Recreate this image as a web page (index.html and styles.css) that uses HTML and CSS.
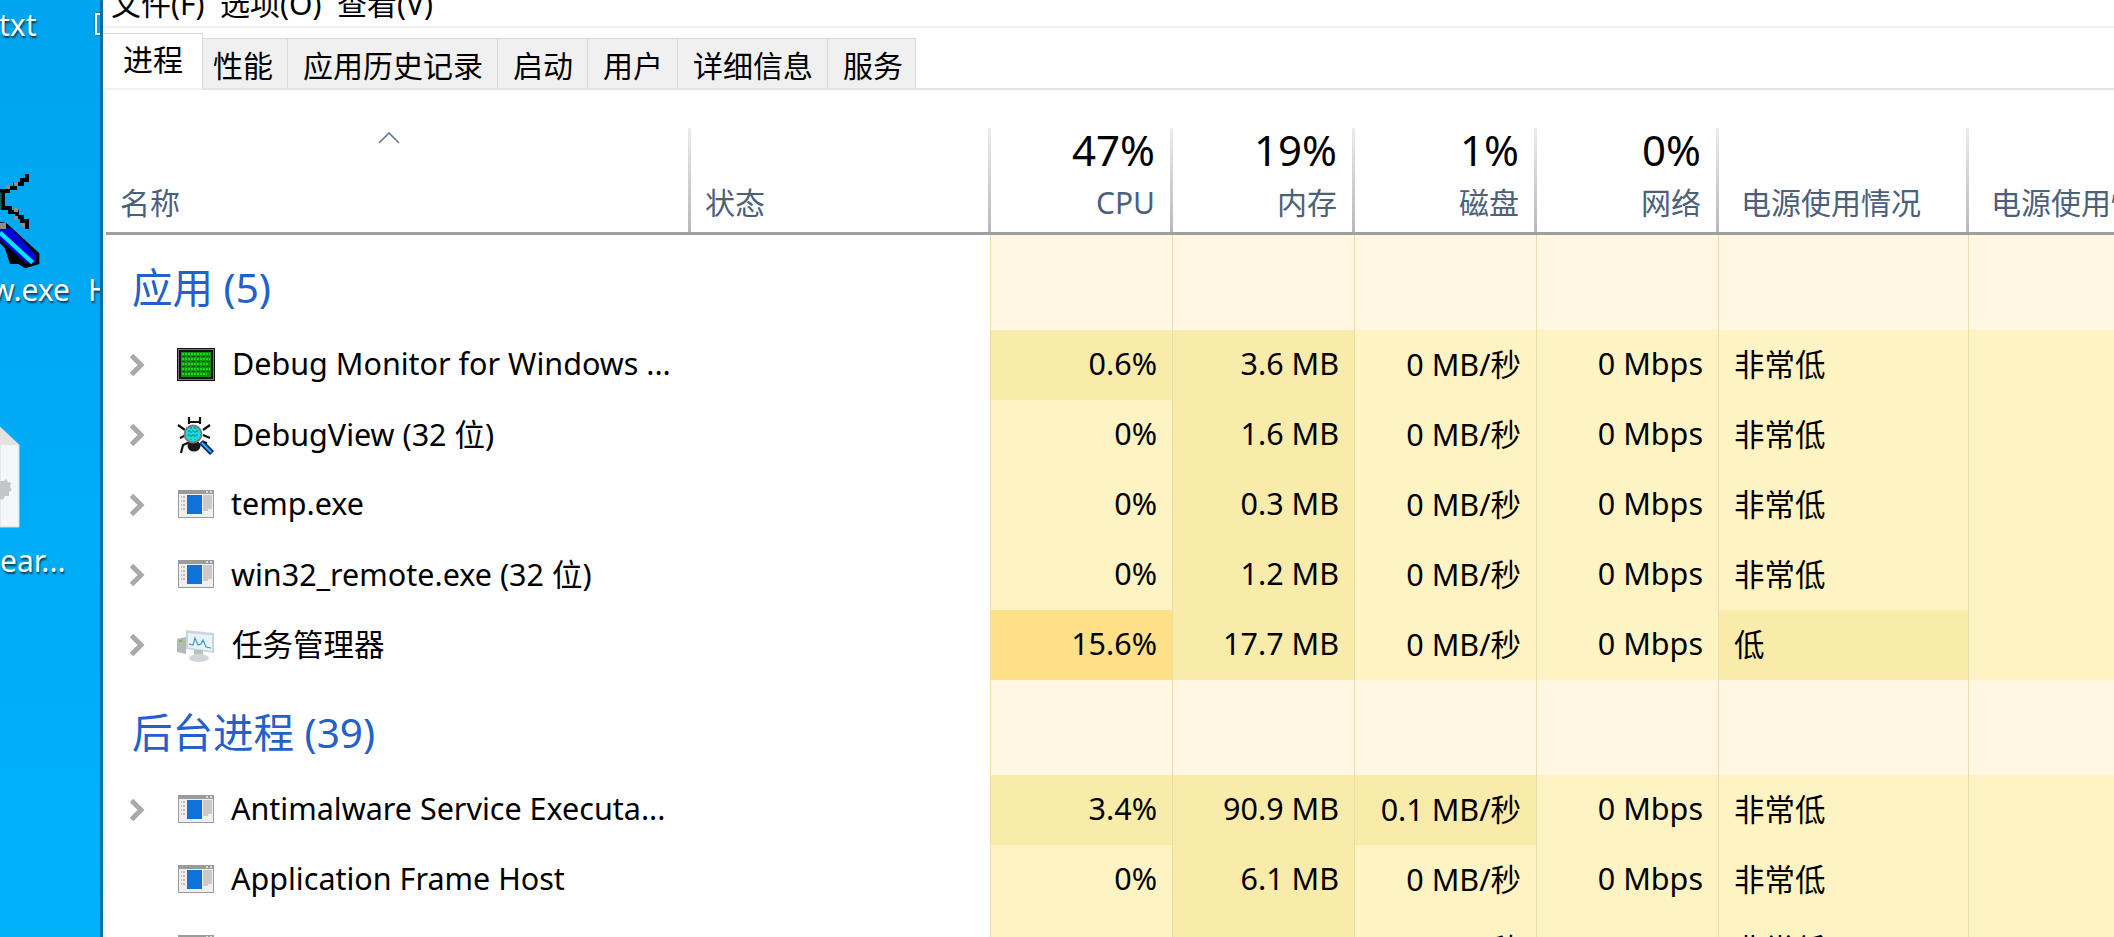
FILE: index.html
```html
<!DOCTYPE html>
<html lang="zh-CN">
<head>
<meta charset="utf-8">
<title>任务管理器</title>
<link rel="stylesheet" href="styles.css">
</head>
<body>
<svg class="defs" width="0" height="0" aria-hidden="true">
  <symbol id="chev" viewBox="0 0 16 24"><path d="M2.5 2.5 12 12 2.5 21.5" fill="none" stroke="#a9a9a9" stroke-width="5"/></symbol>
  <symbol id="app" viewBox="0 0 36 28">
    <rect width="36" height="28" fill="#9b9b9b"/>
    <rect x="1" y="4" width="34" height="23" fill="#efefef"/>
    <rect x="28" y="1" width="2" height="2" fill="#ddd"/><rect x="32" y="1" width="2" height="2" fill="#ddd"/>
    <rect x="9" y="5" width="15" height="19" fill="#0f72d8"/>
    <path d="M3 7h1M5 7h2M3 11h1M5 11h2M3 15h1M5 15h2M3 19h1M5 19h2" stroke="#8a8a8a"/>
    <path d="M25 6h9M25 8h9M25 10h9M25 12h9M25 14h9M25 16h9M25 18h9M25 20h5" stroke="#a5a5a5"/>
  </symbol>
  <symbol id="mon" viewBox="0 0 38 33" shape-rendering="crispEdges">
    <rect width="38" height="33" fill="#111"/>
    <rect x="1" y="1" width="36" height="31" fill="#777"/>
    <rect x="2" y="2" width="34" height="29" fill="#111"/>
    <rect x="4" y="4" width="30" height="25" fill="#0c950c"/>
    <path d="M5 6h28M5 11h28M5 16h27M5 21h28M5 26h25" stroke="#19d819" stroke-width="2" stroke-dasharray="2 1"/>
    <path d="M5 8.500h28M5 13.500h28M5 18.500h28M5 23.500h28" stroke="#064f06" stroke-dasharray="3 2"/>
  </symbol>
  <symbol id="bug" viewBox="0 0 38 38">
    <path d="M12 0v7M23 0v7M12 5h11M1 8l7 5M33 8l-7 5M3 21l6-3M33 21l-7-3M4 36l2-8 7-3M30 26l-4-1" fill="none" stroke="#111" stroke-width="2.200"/>
    <ellipse cx="17" cy="29" rx="6.500" ry="5.500" fill="#1a1a1a"/>
    <circle cx="16" cy="17" r="8.500" fill="#1bdcdc" stroke="#7a7a7a" stroke-width="1.800"/>
    <path d="M11 14h10M11 18h11M14 10v13M18 10v13" stroke="#126b7a" stroke-dasharray="2 2"/>
    <path d="M24 25l11 11" stroke="#111" stroke-width="5.500"/>
    <path d="M24 25l11 11" stroke="#1540e0" stroke-width="3.800"/>
    <path d="M25 26l9 9" stroke="#18e0f8" stroke-width="1.300"/>
  </symbol>
  <symbol id="tm" viewBox="0 0 38 36">
    <path d="M0 12l9-2v17l-9-2z" fill="#b4b8bb"/>
    <rect x="2" y="13" width="3" height="2" fill="#6fc23a"/>
    <path d="M9 3 37 6v20L9 22z" fill="#cfd4d8"/>
    <path d="M11 6 35 8.500V24L11 20.500z" fill="#e6f4fb"/>
    <path d="M12 17l4 1 2-7 3 7 3-1 2-4 3 7 5 1" fill="none" stroke="#3f95d4" stroke-width="1.200"/>
    <rect x="17" y="23" width="9" height="6" fill="#bcc0c3"/>
    <ellipse cx="22" cy="31" rx="10" ry="4" fill="#d3d6d8"/>
  </symbol>
</svg>

<aside class="desktop">
  <span class="dlabel d-txt">txt</span>
  <span class="dglyph"></span>
  <svg class="sword" width="101" height="150" viewBox="0 0 303 450" aria-hidden="true">
    <path d="M0 185 20 190 118 280V312L75 325 55 312 30 312 15 265 0 250z" fill="#000"/>
    <path d="M0 205H34L108 285V308H78L0 240z" fill="#0000d8"/>
    <path d="M0 218 98 308" stroke="#00e8ff" stroke-width="13" fill="none"/>
    <g fill="none" stroke="#000" stroke-width="12" shape-rendering="crispEdges">
      <path d="M80 42V60H65V72H45V85H25V94H0"/>
      <path d="M8 100V145H30V157H50V170H65V182H80V208"/>
    </g>
    <path d="M2 98V150" stroke="#0a6a68" stroke-width="5"/>
    <g fill="#8d8d8d" shape-rendering="crispEdges">
      <rect x="18" y="76" width="12" height="12"/><rect x="41" y="65" width="12" height="12"/>
      <rect x="42" y="145" width="12" height="12"/><rect x="42" y="167" width="12" height="12"/>
      <rect x="64" y="190" width="12" height="12"/><rect x="0" y="188" width="18" height="20"/>
    </g>
  </svg>
  <span class="dlabel d-exe">w.exe</span>
  <span class="dlabel d-h">H</span>
  <svg class="doc" width="20" height="101" viewBox="0 0 20 101" aria-hidden="true">
    <path d="M0 0 19 18V100H0z" fill="#f5f6f8" stroke="#d9dadc"/>
    <path d="M0 0 19 18H0z" fill="#e2e2e2"/>
    <path d="M0 54h4l2-2 2 3 3 1-1 4 2 3-3 2 0 4-4 0-2 4-3-1z" fill="#c3c6c9"/>
  </svg>
  <span class="dlabel d-ear">ear...</span>
</aside>

<main class="window">
  <div class="menu"><span>文件(F)</span><span>选项(O)</span><span>查看(V)</span></div>
  <nav class="tabs">
    <span class="tab active">进程</span>
    <span class="tab tab-narrow">性能</span>
    <span class="tab">应用历史记录</span>
    <span class="tab">启动</span>
    <span class="tab">用户</span>
    <span class="tab">详细信息</span>
    <span class="tab tab-last">服务</span>
  </nav>
  <section class="table">
    <div class="row head">
      <div class="hc hname"><svg class="sort" width="22" height="12" viewBox="0 0 22 12" aria-hidden="true"><path d="M1 11 11 1l10 10" fill="none" stroke="#5d7a94" stroke-width="1.600"/></svg><span class="hlabel">名称</span></div>
      <div class="hc hstatus"><span class="hlabel">状态</span></div>
      <div class="hc num"><span class="pct">47%</span><span class="hlabel">CPU</span></div>
      <div class="hc num"><span class="pct">19%</span><span class="hlabel">内存</span></div>
      <div class="hc num"><span class="pct">1%</span><span class="hlabel">磁盘</span></div>
      <div class="hc num"><span class="pct">0%</span><span class="hlabel">网络</span></div>
      <div class="hc"><span class="hlabel">电源使用情况</span></div>
      <div class="hc"><span class="hlabel">电源使用情况趋势</span></div>
    </div>

    <div class="row group">
      <div class="gtitle">应用 (5)</div><div></div>
      <div class="c g"></div><div class="c g"></div><div class="c g"></div><div class="c g"></div><div class="c g"></div><div class="c g"></div>
    </div>
    <div class="row item">
      <div class="name"><svg class="chev"><use href="#chev"/></svg><svg class="ic ic-mon"><use href="#mon"/></svg><span>Debug Monitor for Windows ...</span></div><div></div>
      <div class="c r mid">0.6%</div><div class="c r mid">3.6 MB</div><div class="c r">0 MB/秒</div><div class="c r">0 Mbps</div><div class="c">非常低</div><div class="c"></div>
    </div>
    <div class="row item">
      <div class="name"><svg class="chev"><use href="#chev"/></svg><svg class="ic ic-bug"><use href="#bug"/></svg><span>DebugView (32 位)</span></div><div></div>
      <div class="c r">0%</div><div class="c r mid">1.6 MB</div><div class="c r">0 MB/秒</div><div class="c r">0 Mbps</div><div class="c">非常低</div><div class="c"></div>
    </div>
    <div class="row item">
      <div class="name"><svg class="chev"><use href="#chev"/></svg><svg class="ic ic-app"><use href="#app"/></svg><span>temp.exe</span></div><div></div>
      <div class="c r">0%</div><div class="c r mid">0.3 MB</div><div class="c r">0 MB/秒</div><div class="c r">0 Mbps</div><div class="c">非常低</div><div class="c"></div>
    </div>
    <div class="row item">
      <div class="name"><svg class="chev"><use href="#chev"/></svg><svg class="ic ic-app"><use href="#app"/></svg><span>win32_remote.exe (32 位)</span></div><div></div>
      <div class="c r">0%</div><div class="c r mid">1.2 MB</div><div class="c r">0 MB/秒</div><div class="c r">0 Mbps</div><div class="c">非常低</div><div class="c"></div>
    </div>
    <div class="row item">
      <div class="name"><svg class="chev"><use href="#chev"/></svg><svg class="ic ic-tm"><use href="#tm"/></svg><span>任务管理器</span></div><div></div>
      <div class="c r high">15.6%</div><div class="c r mid">17.7 MB</div><div class="c r">0 MB/秒</div><div class="c r">0 Mbps</div><div class="c mid">低</div><div class="c"></div>
    </div>

    <div class="row group">
      <div class="gtitle">后台进程 (39)</div><div></div>
      <div class="c g"></div><div class="c g"></div><div class="c g"></div><div class="c g"></div><div class="c g"></div><div class="c g"></div>
    </div>
    <div class="row item">
      <div class="name"><svg class="chev"><use href="#chev"/></svg><svg class="ic ic-app"><use href="#app"/></svg><span>Antimalware Service Executa...</span></div><div></div>
      <div class="c r mid">3.4%</div><div class="c r mid">90.9 MB</div><div class="c r mid">0.1 MB/秒</div><div class="c r">0 Mbps</div><div class="c">非常低</div><div class="c"></div>
    </div>
    <div class="row item">
      <div class="name"><span class="chev"></span><svg class="ic ic-app"><use href="#app"/></svg><span>Application Frame Host</span></div><div></div>
      <div class="c r">0%</div><div class="c r mid">6.1 MB</div><div class="c r">0 MB/秒</div><div class="c r">0 Mbps</div><div class="c">非常低</div><div class="c"></div>
    </div>
    <div class="row item">
      <div class="name"><span class="chev"></span><svg class="ic ic-app"><use href="#app"/></svg><span>COM Surrogate</span></div><div></div>
      <div class="c r">0%</div><div class="c r mid">1.1 MB</div><div class="c r">0 MB/秒</div><div class="c r">0 Mbps</div><div class="c">非常低</div><div class="c"></div>
    </div>
  </section>
</main>
</body>
</html>
```

FILE: styles.css
```css
* { box-sizing: border-box; }
html, body { height: 100%; }
body {
  margin: 0;
  width: 2114px;
  height: 937px;
  overflow: hidden;
  display: flex;
  font-family: "Noto Sans", "Noto Sans CJK SC", sans-serif;
  font-size: 30px;
  color: #000;
  background: #fff;
}
.defs { position: absolute; }

/* desktop */
.desktop {
  position: relative;
  flex: 0 0 103px;
  height: 937px;
  overflow: hidden;
  background: linear-gradient(#00a4ef, #00b2fb);
  border-right: 3px solid #0a6f9e;
}
.dlabel {
  position: absolute;
  color: #fff;
  line-height: 40px;
  text-shadow: 1px 2px 2px rgba(0, 0, 0, .65);
}
.d-txt { left: -1px; top: 5px; }
.d-exe { left: -9px; top: 270px; }
.d-h { left: 88px; top: 270px; }
.d-ear { left: 0; top: 541px; }
.dglyph {
  position: absolute;
  left: 95px; top: 13px;
  width: 8px; height: 22px;
  border: 2px solid #fff;
  box-shadow: 0 0 2px rgba(0, 0, 0, .6);
}
.sword { position: absolute; left: 0; top: 160px; }
.doc { position: absolute; left: 0; top: 427px; }

/* window */
.window { flex: 1; min-width: 0; display: flex; flex-direction: column; background: #fff; }
.menu {
  height: 28px;
  display: flex;
  align-items: flex-end;
  gap: 15.5px;
  padding: 0 0 7px 8px;
  border-bottom: 2px solid #f0f0f0;
  overflow: hidden;
  line-height: 30px;
}
.menu span { flex: none; }
.tabs {
  height: 62px;
  padding-top: 5px;
  display: flex;
  align-items: flex-end;
  border-bottom: 2px solid #e4e4e4;
}
.tab {
  height: 50px;
  padding: 5px 14px 0 15px;
  display: flex;
  align-items: center;
  background: #f0f0f0;
  border: 1px solid #d9d9d9;
  border-left: 0;
  border-bottom: 0;
  line-height: 1;
}
.tab-narrow { padding: 5px 14px 0 10px; }
.tab-last { padding: 5px 12px 0 15px; }
.tab.active {
  height: 57px;
  width: 100px;
  padding: 0 0 3px 20px;
  margin-bottom: -2px;
  background: #fff;
  border-bottom: 2px solid #f2f2f2;
  position: relative;
  z-index: 1;
}

/* table */
.table {
  flex: 1;
  min-height: 0;
  overflow: hidden;
  padding-top: 38px;
  border-left: 3px solid #f2f2f2;
}
.row {
  display: grid;
  grid-template-columns: 585px 299px 183px 182px 182px 182px 250px 145px;
}
.row.head { grid-template-columns: 585px 300px 182px 182px 182px 182px 250px 145px; }
.head { height: 107px; border-bottom: 3px solid #a0a0a0; }
.hc {
  display: flex;
  flex-direction: column;
  justify-content: flex-end;
  padding: 0 0 0 22px;
  position: relative;
  overflow: hidden;
  white-space: nowrap;
  border-right: 3px solid;
  border-image: linear-gradient(#ececec, #b8b8b8) 1;
}
.hc:last-child { border-right: 0; border-image: none; }
.hname { padding-left: 14px; }
.hname .sort { position: absolute; left: 272px; top: 4px; }
.hstatus { padding-left: 14px; }
.hc.num { align-items: flex-end; padding: 0 15px 0 0; }
.hlabel { color: #4d6079; line-height: 40px; margin-bottom: 9px; }
.pct { font-size: 42px; line-height: 50px; margin-bottom: 8px; }

.group { height: 95px; }
.gtitle { padding: 28px 0 0 26px; font-size: 40.5px; line-height: 50px; color: #2460c9; white-space: nowrap; }
.item { height: 70px; font-size: 30.5px; }
.c {
  display: flex;
  align-items: center;
  padding: 0 15px 5px;
  white-space: nowrap;
  background: #fef3c2;
  border-right: 1px solid #ecdca8;
}
.c.r { justify-content: flex-end; padding: 0 15px 5px 0; }
.c.g { background: #fff7e1; }
.c.mid { background: #f9ebaa; }
.c.high { background: #ffe187; }
.row > .c:nth-child(3) { border-left: 1px solid #ecdca8; }
.row > .c:last-child { border-right: 0; }
.name {
  display: flex;
  align-items: center;
  white-space: nowrap;
  padding-left: 23px;
}
.name span:last-child { padding-bottom: 5px; }
.chev { flex: none; width: 16px; height: 24px; margin-right: 32px; display: block; }
.ic { flex: none; display: block; margin-right: 17px; }
.ic-app { width: 36px; height: 28px; margin: -2px 17px 0 1px; }
.ic-mon { width: 38px; height: 33px; margin-top: -2px; }
.ic-bug { width: 38px; height: 38px; margin-top: 2px; }
.ic-tm { width: 38px; height: 36px; }
```
